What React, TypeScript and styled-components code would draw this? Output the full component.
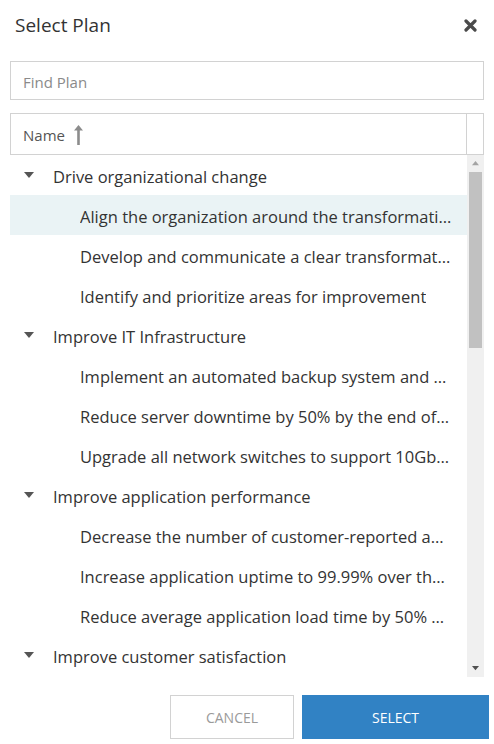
import React, { useState } from "react";
import styled, { createGlobalStyle } from "styled-components";

const GlobalStyle = createGlobalStyle`
  html, body {
    margin: 0;
    padding: 0;
    background: #ffffff;
  }
  body {
    font-family: "Open Sans", "Noto Sans", sans-serif;
    color: #333333;
  }
`;

interface PlanItem {
  id: string;
  name: string;
  children?: PlanItem[];
}

const plans: PlanItem[] = [
  {
    id: "g1",
    name: "Drive organizational change",
    children: [
      { id: "g1a", name: "Align the organization around the transformation vision" },
      { id: "g1b", name: "Develop and communicate a clear transformation roadmap" },
      { id: "g1c", name: "Identify and prioritize areas for improvement" },
    ],
  },
  {
    id: "g2",
    name: "Improve IT Infrastructure",
    children: [
      { id: "g2a", name: "Implement an automated backup system and recovery plan" },
      { id: "g2b", name: "Reduce server downtime by 50% by the end of the year" },
      { id: "g2c", name: "Upgrade all network switches to support 10Gbps" },
    ],
  },
  {
    id: "g3",
    name: "Improve application performance",
    children: [
      { id: "g3a", name: "Decrease the number of customer-reported application errors" },
      { id: "g3b", name: "Increase application uptime to 99.99% over the next quarter" },
      { id: "g3c", name: "Reduce average application load time by 50% by year end" },
    ],
  },
  {
    id: "g4",
    name: "Improve customer satisfaction",
    children: [],
  },
];

const Dialog = styled.div`
  width: 494px;
  height: 744px;
  box-sizing: border-box;
  display: flex;
  flex-direction: column;
`;

const TitleBar = styled.div`
  height: 50px;
  display: flex;
  align-items: center;
  justify-content: space-between;
  padding: 0 16px 0 15px;
  box-sizing: border-box;
`;

const Title = styled.h1`
  margin: 0;
  font-size: 19px;
  font-weight: 400;
  color: #333333;
`;

const CloseButton = styled.button`
  border: none;
  background: transparent;
  padding: 0;
  width: 16px;
  height: 16px;
  display: flex;
  align-items: center;
  justify-content: center;
  cursor: pointer;
`;

const SearchInput = styled.input`
  margin: 11px 10px 0;
  height: 39px;
  box-sizing: border-box;
  border: 1px solid #d2d2d2;
  padding: 2px 12px 0;
  font-family: inherit;
  font-size: 15px;
  color: #333333;
  outline: none;
  &::placeholder {
    color: #8a8a8a;
  }
`;

const Grid = styled.div`
  margin: 13px 10px 0;
  display: flex;
  flex-direction: column;
`;

const HeaderRow = styled.div`
  height: 42px;
  box-sizing: border-box;
  border: 1px solid #d2d2d2;
  display: flex;
`;

const HeaderCell = styled.div`
  flex: 1;
  display: flex;
  align-items: center;
  gap: 9px;
  padding: 2px 0 0 12px;
  font-size: 15px;
  color: #555555;
`;

const HeaderSpacer = styled.div`
  width: 16px;
  border-left: 1px solid #d2d2d2;
`;

const Body = styled.div`
  height: 522px;
  display: flex;
`;

const Rows = styled.div`
  flex: 1;
  min-width: 0;
  overflow: hidden;
`;

const Row = styled.div<{ $level: number; $selected: boolean }>`
  height: 40px;
  box-sizing: border-box;
  display: flex;
  align-items: center;
  padding: 3px 14px 0 ${(p) => (p.$level === 0 ? 14 : 70)}px;
  background: ${(p) => (p.$selected ? "#eaf3f5" : "transparent")};
  font-size: 16.5px;
  color: #333333;
  cursor: pointer;
`;

const Caret = styled.span`
  width: 29px;
  flex: none;
  display: flex;
  align-items: center;
  margin-top: -3px;
`;

const Label = styled.span`
  white-space: nowrap;
  overflow: hidden;
  text-overflow: ellipsis;
`;

const ScrollBar = styled.div`
  width: 17px;
  background: #f0f0f0;
  display: flex;
  flex-direction: column;
  align-items: center;
`;

const ScrollArrow = styled.div<{ $end?: boolean }>`
  height: 17px;
  width: 17px;
  display: flex;
  align-items: center;
  justify-content: center;
  margin-top: ${(p) => (p.$end ? "auto" : "0")};
`;

const ScrollThumb = styled.div`
  width: 13px;
  height: 176px;
  background: #c1c1c1;
`;

const Footer = styled.div`
  margin-top: auto;
  padding: 0 5px 5px 0;
  display: flex;
  justify-content: flex-end;
  gap: 8px;
`;

const Button = styled.button<{ $primary?: boolean }>`
  height: 44px;
  width: ${(p) => (p.$primary ? 187 : 124)}px;
  box-sizing: border-box;
  border: 1px solid ${(p) => (p.$primary ? "#3182c4" : "#d2d2d2")};
  background: ${(p) => (p.$primary ? "#3182c4" : "#ffffff")};
  color: ${(p) => (p.$primary ? "#ffffff" : "#9a9a9a")};
  font-family: inherit;
  font-size: 14px;
  text-transform: uppercase;
  cursor: pointer;
`;

const TriangleDown = ({ size = 10, color = "#555" }: { size?: number; color?: string }) => (
  <svg width={size} height={size * 0.6} viewBox="0 0 10 6">
    <path d="M0 0 H10 L5 6 Z" fill={color} />
  </svg>
);

const TriangleUp = ({ size = 10, color = "#555" }: { size?: number; color?: string }) => (
  <svg width={size} height={size * 0.6} viewBox="0 0 10 6">
    <path d="M0 6 H10 L5 0 Z" fill={color} />
  </svg>
);

const SortUpIcon = () => (
  <svg width="9" height="20" viewBox="0 0 9 20">
    <path d="M4.5 0 L9 5.5 H5.8 V20 H3.2 V5.5 H0 Z" fill="#8c8c8c" />
  </svg>
);

const CloseIcon = () => (
  <svg width="13" height="13" viewBox="0 0 13 13">
    <path
      d="M2 2 L11 11 M11 2 L2 11"
      stroke="#4a4a4a"
      strokeWidth="3.2"
      strokeLinecap="round"
    />
  </svg>
);

export default function App() {
  const [selected, setSelected] = useState("g1a");

  const rows: { item: PlanItem; level: number }[] = [];
  plans.forEach((group) => {
    rows.push({ item: group, level: 0 });
    group.children?.forEach((child) => rows.push({ item: child, level: 1 }));
  });

  return (
    <>
      <GlobalStyle />
      <Dialog>
        <TitleBar>
          <Title>Select Plan</Title>
          <CloseButton aria-label="Close">
            <CloseIcon />
          </CloseButton>
        </TitleBar>
        <SearchInput placeholder="Find Plan" />
        <Grid>
          <HeaderRow>
            <HeaderCell>
              Name <SortUpIcon />
            </HeaderCell>
            <HeaderSpacer />
          </HeaderRow>
          <Body>
            <Rows>
              {rows.map(({ item, level }) => (
                <Row
                  key={item.id}
                  $level={level}
                  $selected={selected === item.id}
                  onClick={() => level > 0 && setSelected(item.id)}
                >
                  {level === 0 && (
                    <Caret>
                      <TriangleDown />
                    </Caret>
                  )}
                  <Label>{item.name}</Label>
                </Row>
              ))}
            </Rows>
            <ScrollBar>
              <ScrollArrow>
                <TriangleUp size={7} color="#a3a3a3" />
              </ScrollArrow>
              <ScrollThumb />
              <ScrollArrow $end>
                <TriangleDown size={7} color="#505050" />
              </ScrollArrow>
            </ScrollBar>
          </Body>
        </Grid>
        <Footer>
          <Button>Cancel</Button>
          <Button $primary>Select</Button>
        </Footer>
      </Dialog>
    </>
  );
}
